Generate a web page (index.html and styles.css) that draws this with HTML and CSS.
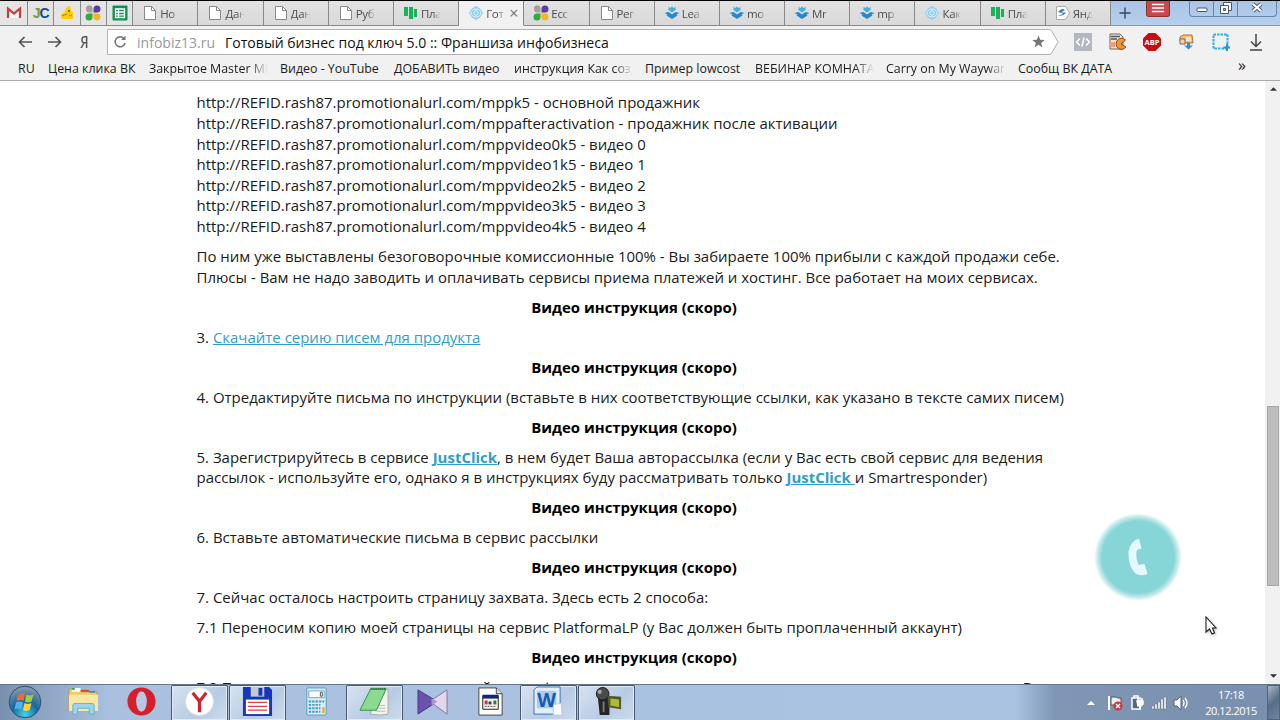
FILE: index.html
```html
<!DOCTYPE html>
<html lang="ru">
<head>
    <meta charset="UTF-8">
    <title>Готовый бизнес под ключ 5.0 :: Франшиза инфобизнеса</title>
    <link rel="stylesheet" href="styles.css">
</head>
<body>
    <!-- Общие значки -->
    <svg class="defs" width="0" height="0">
        <symbol id="doc" viewBox="0 0 16 16">
            <path d="M2.500 1.500h7l4 4v9h-11z" fill="#fff" stroke="#888"/>
            <path d="M9.500 1.500v4h4" fill="none" stroke="#888"/>
        </symbol>
        <symbol id="bars" viewBox="0 0 16 16">
            <path d="M1 2h4v9H1zM6 2h4v12H6zM11 4h3v8h-3z" fill="#16b457"/>
        </symbol>
        <symbol id="eye" viewBox="0 0 16 16">
            <path d="M8 .500L15.500 8 8 15.500.500 8z" fill="#9fd3ee"/>
            <circle cx="8" cy="8" r="6" fill="#8dcdec"/>
            <ellipse cx="8" cy="8" rx="5" ry="4" fill="none" stroke="#e6f5fc"/>
            <circle cx="8" cy="8" r="2.200" fill="none" stroke="#e6f5fc"/>
        </symbol>
        <symbol id="dots" viewBox="0 0 16 16">
            <path d="M1 4a3.300 3.300 0 1 1 6.500 0v3.500H4A3.300 3.300 0 0 1 1 4z" fill="#a89f98"/>
            <path d="M8.500 7.500V4A3.500 3.500 0 1 1 12 7.500z" fill="#5b3c9b"/>
            <path d="M7.500 8.500V12A3.500 3.500 0 1 1 4 8.500z" fill="#35a843"/>
            <path d="M8.500 8.500H12A3.500 3.500 0 1 1 8.500 12z" fill="#f9b51b"/>
        </symbol>
        <symbol id="lead" viewBox="0 0 16 16">
            <path d="M4.500 2l2 1L8 1.500 9.500 3l2-1v3L8 7.500 4.500 5z" fill="#45aee2"/>
            <path d="M.500 8l4-1L8 9.500 11.500 7l4 1-3 1.500 1 1L8 14l-5.500-3.500 1-1z" fill="#2388ce"/>
        </symbol>
    </svg>

    <header>
        <div class="tabs">
            <div class="pin"><svg viewBox="0 0 16 16"><path d="M2 13V3.500l6 5 6-5V13" fill="#f4f4f4" stroke="#cc3a3a" stroke-width="2.200"/></svg></div>
            <div class="pin jc"><span>J</span><b>C</b></div>
            <div class="pin"><svg viewBox="0 0 16 16"><path d="M2 9l4-2 1-4 3-2 2 2v3l2 1v7H3z" fill="#fc0"/><path d="M3 11l5-2M10 10q1 2 3 0" fill="none" stroke="#b88200"/><circle cx="10" cy="6" r="1" fill="#654"/></svg></div>
            <div class="pin"><svg><use href="#dots"/></svg></div>
            <div class="pin"><svg viewBox="0 0 16 16"><rect x=".500" y=".500" width="15" height="15" rx="1" fill="#0f9150"/><path d="M3.500 4h9v8.500h-9zM3.500 7h9M3.500 9.800h9M6.500 4v8" fill="none" stroke="#fff" stroke-width="1.300"/></svg></div>
            <div class="tab"><svg><use href="#doc"/></svg><span>Но</span></div>
            <div class="tab"><svg><use href="#doc"/></svg><span>Дан</span></div>
            <div class="tab"><svg><use href="#doc"/></svg><span>Дан</span></div>
            <div class="tab"><svg><use href="#doc"/></svg><span>Руб</span></div>
            <div class="tab"><svg><use href="#bars"/></svg><span>Пла</span></div>
            <div class="tab active"><svg><use href="#eye"/></svg><span>Гот</span><i>×</i></div>
            <div class="tab"><svg><use href="#dots"/></svg><span>Ecc</span></div>
            <div class="tab"><svg><use href="#doc"/></svg><span>Рег</span></div>
            <div class="tab"><svg><use href="#lead"/></svg><span>Lea</span></div>
            <div class="tab"><svg><use href="#lead"/></svg><span>mo</span></div>
            <div class="tab"><svg><use href="#lead"/></svg><span>Mr</span></div>
            <div class="tab"><svg><use href="#lead"/></svg><span>mp</span></div>
            <div class="tab"><svg><use href="#eye"/></svg><span>Как</span></div>
            <div class="tab"><svg><use href="#bars"/></svg><span>Пла</span></div>
            <div class="tab"><svg viewBox="0 0 16 16"><path d="M1.500 1.500h9l4 6.500-4 6.500h-9z" fill="#fff" stroke="#aaa"/><path d="M3 7q4-5 7-2L6 7.500h5q-3 4-8 3 5-1 5-2z" fill="#3d78c4"/></svg><span>Янд</span></div>
            <div class="window-bar">
                <svg class="plus" viewBox="0 0 12 12"><path d="M6 .500v11M.500 6h11" stroke="#34465c" stroke-width="1.400"/></svg>
                <div class="menu"><svg viewBox="0 0 16 12"><path d="M1 2h14M1 6h14M1 10h14" stroke="#fff" stroke-width="1.800"/></svg></div>
                <div class="controls">
                    <div><svg viewBox="0 0 14 14"><rect x="2" y="7" width="10" height="3.500" rx="1" fill="#fff" stroke="#46566e"/></svg></div>
                    <div><svg viewBox="0 0 14 14"><path d="M4.500 1.500h8v8h-8z" fill="#fff" stroke="#46566e"/><path d="M1.500 4.500h8v8h-8z" fill="#fff" stroke="#46566e"/><path d="M4.500 7.500h2v2h-2z" fill="#9ebbe0" stroke="#46566e"/></svg></div>
                    <div><svg viewBox="0 0 14 14"><path d="M3 3l8 7M11 3l-8 7" stroke="#46566e" stroke-width="4"/><path d="M3 3l8 7M11 3l-8 7" stroke="#fff" stroke-width="2.200"/></svg></div>
                </div>
            </div>
        </div>

        <div class="toolbar">
            <svg class="arrow" viewBox="0 0 14 12"><path d="M14 6H1.500M6.500 1l-5 5 5 5" fill="none" stroke="#555" stroke-width="1.700"/></svg>
            <svg class="arrow" viewBox="0 0 14 12"><path d="M0 6h12.500M7.500 1l5 5-5 5" fill="none" stroke="#555" stroke-width="1.700"/></svg>
            <span class="ya">Я</span>
            <div class="address">
                <svg class="address-shape" viewBox="0 0 952 26"><path d="M.500.500H942q2 0 3 2l6 10.500-6 10.500q-1 2-3 2H.500z" fill="#fff" stroke="#b2b2b2"/></svg>
                <svg class="reload" viewBox="0 0 14 14"><path d="M11 3.600A5 5 0 1 0 12 8" fill="none" stroke="#777" stroke-width="1.500"/><path d="M8 5h4.500V.500z" fill="#777"/></svg>
                <span class="host">infobiz13.ru</span>
                <span class="title">Готовый бизнес под ключ 5.0 :: Франшиза инфобизнеса</span>
                <svg class="star" viewBox="0 0 14 14"><path d="M7 .500l1.800 4.700 4.900.200-3.900 3.100 1.400 4.900L7 10.600l-4.200 2.800 1.400-4.900L.300 5.400l4.900-.200z" fill="#777"/></svg>
            </div>
            <div class="extensions">
                <svg viewBox="0 0 18 18"><path d="M0 0h18v18H0z" fill="#b3b7c2"/><path d="M6 5.500L2.500 9 6 12.500M12 5.500L15.500 9 12 12.500M10 4.500l-2 9" fill="none" stroke="#fff" stroke-width="1.500"/></svg>
                <svg viewBox="0 0 18 18"><path d="M1 1h10l3 3v12H1z" fill="#ece8de" stroke="#665"/><path d="M2 3.500h9M2 6h6" stroke="#555" stroke-width="1.500"/><path d="M1 9h5v5H1z" fill="#ef9d83"/><path d="M16.500 7A5.500 5.500 0 1 0 17 14l-5-3z" fill="#f39431" stroke="#8b4a17"/></svg>
                <svg class="abp" viewBox="0 0 18 18"><path d="M5.500 0h7L18 5.500v7L12.500 18h-7L0 12.500v-7z" fill="#c70d12"/><text x="9" y="12">ABP</text></svg>
                <svg viewBox="0 0 18 18"><path d="M2 4l3-2h9l1 8H6L2 8z" fill="#fbc06d" stroke="#a87438"/><path d="M2 6h5v5H2z" fill="#eed3b2" stroke="#766"/><path d="M8 4h5v4H8z" fill="#fce5b9"/><path d="M9 9.500h3v3h3l-4.500 4-4.500-4h3z" fill="#2e91d0"/></svg>
                <svg viewBox="0 0 18 18"><path d="M1.500 1.500h14v14h-14z" fill="none" stroke="#2caee0" stroke-width="2" stroke-dasharray="2.500 1"/><path d="M15 11v7M11.500 14.500H18" stroke="#1a9cd8" stroke-width="2"/></svg>
                <svg viewBox="0 0 18 18"><path d="M9 1v12M4 8.500l5 5 5-5M3 17h12" fill="none" stroke="#444" stroke-width="1.500"/></svg>
            </div>
        </div>

        <nav class="bookmarks">
            <a>RU</a>
            <a>Цена клика ВК</a>
            <a class="fade">Закрытое Master Mi</a>
            <a>Видео - YouTube</a>
            <a>ДОБАВИТЬ видео</a>
            <a class="fade">инструкция Как соз,</a>
            <a>Пример lowcost</a>
            <a class="fade">ВЕБИНАР КОМНАТА</a>
            <a class="fade">Carry on My Waywar</a>
            <a>Сообщ ВК ДАТА</a>
            <a class="more">»</a>
        </nav>
    </header>

    <main>
        <article>
            <p>http://REFID.rash87.promotionalurl.com/mppk5 - основной продажник<br>
            http://REFID.rash87.promotionalurl.com/mppafteractivation - продажник после активации<br>
            http://REFID.rash87.promotionalurl.com/mppvideo0k5 - видео 0<br>
            http://REFID.rash87.promotionalurl.com/mppvideo1k5 - видео 1<br>
            http://REFID.rash87.promotionalurl.com/mppvideo2k5 - видео 2<br>
            http://REFID.rash87.promotionalurl.com/mppvideo3k5 - видео 3<br>
            http://REFID.rash87.promotionalurl.com/mppvideo4k5 - видео 4</p>
            <p>По ним уже выставлены безоговорочные комиссионные 100% - Вы забираете 100% прибыли с каждой продажи себе.<br>Плюсы - Вам не надо заводить и оплачивать сервисы приема платежей и хостинг. Все работает на моих сервисах.</p>
            <p class="video">Видео инструкция (скоро)</p>
            <p>3. <a>Скачайте серию писем для продукта</a></p>
            <p class="video">Видео инструкция (скоро)</p>
            <p>4. Отредактируйте письма по инструкции (вставьте в них соответствующие ссылки, как указано в тексте самих писем)</p>
            <p class="video">Видео инструкция (скоро)</p>
            <p>5. Зарегистрируйтесь в сервисе <a><b>JustClick</b></a>, в нем будет Ваша авторассылка (если у Вас есть свой сервис для ведения<br>рассылок - используйте его, однако я в инструкциях буду рассматривать только <a><b>JustClick </b></a>и Smartresponder)</p>
            <p class="video">Видео инструкция (скоро)</p>
            <p>6. Вставьте автоматические письма в сервис рассылки</p>
            <p class="video">Видео инструкция (скоро)</p>
            <p>7. Сейчас осталось настроить страницу захвата. Здесь есть 2 способа:</p>
            <p>7.1 Переносим копию моей страницы на сервис PlatformaLP (у Вас должен быть проплаченный аккаунт)</p>
            <p class="video">Видео инструкция (скоро)</p>
            <p>7.2 Переносим копию страницы на свой через форму и размещаем ее на странице с помощью того же сервиса. В</p>
        </article>
        <div class="scrollbar">
            <svg viewBox="0 0 8 4"><path d="M0 4l4-4 4 4z" fill="#333"/></svg>
            <div class="thumb"></div>
            <svg viewBox="0 0 8 4"><path d="M0 0l4 4 4-4z" fill="#333"/></svg>
        </div>
        <!-- Кнопка обратного звонка -->
        <div class="callback">
            <svg viewBox="0 0 20 38"><path d="M11 .500L13.500 10.500L9 12Q7 18 10.500 27L16.500 26L19.500 36Q12 39 7 35Q0 28 .500 14Q2 3 11 .500z" fill="#e6f8fb"/></svg>
        </div>
        <svg class="cursor" viewBox="0 0 12 19"><path d="M1 1v15l3.500-3 2.500 5 2.500-1L7.500 12H11z" fill="#fff" stroke="#222" stroke-width="1.100"/></svg>
    </main>

    <footer>
        <div class="start">
            <svg viewBox="0 0 34 34">
                <defs>
                    <radialGradient id="orb" cx=".5" cy=".9" r=".85"><stop offset="0" stop-color="#3fd5ed"/><stop offset=".5" stop-color="#15679e"/><stop offset="1" stop-color="#8399ae"/></radialGradient>
                </defs>
                <circle cx="17" cy="17" r="15.800" fill="url(#orb)" stroke="#344f68"/>
                <path d="M10 10q4-3 7-1l-1.500 7q-3-2-7 0z" fill="#f06a32"/>
                <path d="M18.500 9.500q3 2 7 0l-2 7q-4 2-6.500 0z" fill="#a4cf3a"/>
                <path d="M8 17.500q4-2 7 0l-1.500 7q-3-2-7 0z" fill="#52b2ec"/>
                <path d="M16.500 18q3 2 7 0l-2 7q-3 2-6.500 0z" fill="#fdd23b"/>
            </svg>
        </div>
        <div class="task"><svg viewBox="0 0 32 32"><path d="M1 3h11l2 3h16v20H1z" fill="#eecb6b" stroke="#bd994a"/><path d="M4 2h9v4H4z" fill="#fff"/><path d="M4 2h3v2H4z" fill="#39a845"/><path d="M13 4h9v2h-9z" fill="#cf4e36"/><path d="M22 5h6v2h-6z" fill="#3d8ec4"/><path d="M1 9h30v17H1z" fill="#f9e7a3"/><path d="M5 29V20q0-2 2-2h18q2 0 2 2v9h-5v-6H10v6z" fill="#9bd4ec" stroke="#66afd2"/></svg></div>
        <div class="task"><svg viewBox="0 0 32 32"><ellipse cx="16" cy="16" rx="14.500" ry="14.500" fill="#d61f2b"/><ellipse cx="16" cy="16" rx="5.500" ry="10.500" fill="#b6c9e2"/></svg></div>
        <div class="task open"><svg viewBox="0 0 32 32"><circle cx="16" cy="16" r="14.500" fill="#fff" stroke="#ddd"/><path d="M9 7l7 9 7-9M16 15v12" fill="none" stroke="#d3222a" stroke-width="3.300"/></svg></div>
        <div class="task open"><svg viewBox="0 0 32 32"><path d="M1 1h27l3 3v27H1z" fill="#1537bb"/><path d="M9 1h14v10H9z" fill="#c6c9d1"/><path d="M17 2h4v8h-4z" fill="#1537bb"/><path d="M4 14h24v15H4z" fill="#fff"/><path d="M6 17h20M6 21h20M6 25h20" stroke="#d6444a" stroke-width="1.300"/></svg></div>
        <div class="task"><svg viewBox="0 0 32 32"><rect x="6" y="2" width="20" height="28" rx="1" fill="#d9edf7" stroke="#5a9bc1"/><path d="M8 5h16v7H8z" fill="#f8fafb" stroke="#7ba9c1"/><path d="M20 6.500h2v4h-2z" fill="none" stroke="#555"/><path d="M8 16h16M8 19.500h12M8 23h12M8 26.500h12" stroke="#489bc6" stroke-width="2" stroke-dasharray="2.500 1"/><path d="M22 22h2.500v6H22z" fill="#edaa3c"/></svg></div>
        <div class="task open"><svg viewBox="0 0 32 32"><path d="M16 3h14v26q-8 2-18 0z" fill="#f4f4ee" stroke="#aaa99e"/><path d="M18 20h9M17 23h10M17 26h10" stroke="#bbb"/><path d="M12 3h16L18 25H1z" fill="#8cda91" stroke="#309245"/><path d="M12 3h16" stroke="#245f2b" stroke-width="2.500" stroke-dasharray="1 1"/></svg></div>
        <div class="task"><svg viewBox="0 0 32 32"><path d="M1 4l20 12L1 29z" fill="#6852ae" stroke="#49348a"/><path d="M31 4v25L16 18v-4z" fill="#e2d7ec" stroke="#84719f"/><path d="M15 13l6 3-6 4z" fill="#a896cf"/></svg></div>
        <div class="task"><svg viewBox="0 0 32 32"><path d="M4 2h18l6 6v22H4z" fill="#fff" stroke="#444"/><path d="M22 2v6h6" fill="#ddd" stroke="#444"/><path d="M8 10h16v14H8z" fill="#f6f3df" stroke="#222"/><path d="M8 9h16v4H8z" fill="#17247d"/><path d="M10 15h3v4h-3z" fill="#c33"/><path d="M14 16h3v3h-3z" fill="#23389d"/><path d="M19 15h3v4h-3z" fill="#287c42"/><path d="M10 21h12" stroke="#555" stroke-dasharray="2 1"/></svg></div>
        <div class="task open word"><svg viewBox="0 0 32 32"><path d="M4 1h24v28H1V4z" fill="#e3eef9" stroke="#3874b1"/><path d="M4 5h20v18H4z" fill="#a9cbed"/><path d="M21 19l8-1 1 12h-9z" fill="#fff" stroke="#bbcde0"/><text x="14" y="22">W</text></svg></div>
        <div class="task open"><svg viewBox="0 0 32 32"><path d="M7 11h12v19H9z" fill="#252525"/><circle cx="12" cy="8" r="6.500" fill="#4b4b4b" stroke="#171717"/><circle cx="9" cy="6" r="2.200" fill="#a9a9a9"/><path d="M17 10l14 1v13l-13-2z" fill="#53582a"/><path d="M20 13l9 1v8l-9-2z" fill="#aebb37"/><path d="M13 16v11" stroke="#777" stroke-width="2"/></svg></div>

        <div class="tray">
            <svg class="up" viewBox="0 0 8 5"><path d="M0 5l4-4 4 4z" fill="#fff"/></svg>
            <svg viewBox="0 0 16 16"><path d="M2 1v14" stroke="#fff" stroke-width="2"/><path d="M4 2h5l2 1h3v7H4z" fill="#e8edf2" stroke="#555"/><circle cx="11" cy="11" r="4.500" fill="#d53435"/><path d="M9 9l4 4M13 9l-4 4" stroke="#fff" stroke-width="1.500"/></svg>
            <svg viewBox="0 0 16 16"><path d="M3 3h8v11H3zM5 1h4v2H5z" fill="#536983" stroke="#fff" stroke-width="1.500"/><path d="M9 3v3M13 3v3M8 6h6v3l-2 2H9zM11 11v4" fill="#fff" stroke="#fff" stroke-width="1.500"/></svg>
            <svg viewBox="0 0 16 16"><path d="M1 11h2v3H1zM4 9h2v5H4zM7 7h2v7H7zM10 4h2v10h-2zM13 2h2v12h-2z" fill="#fff" stroke="#566" stroke-width=".400"/></svg>
            <svg viewBox="0 0 16 16"><path d="M1 5h3l4-4v14l-4-4H1z" fill="#f7f9fa" stroke="#566"/><path d="M10 5q2 3 0 6M12 3q4 5 0 10" fill="none" stroke="#fff" stroke-width="1.300"/></svg>
            <div class="clock">17:18<br>20.12.2015</div>
            <div class="desktop"></div>
        </div>
    </footer>
</body>
</html>
```
FILE: styles.css
```css
* {
    box-sizing: border-box;
}

body {
    margin: 0;
    width: 1280px;
    height: 720px;
    display: flex;
    flex-direction: column;
    overflow: hidden;
    background: #fff;
    color: #1b1b1b;
    font-family: "Open Sans", "Noto Sans", sans-serif;
}

svg {
    display: block;
    flex: none;
}

.defs {
    display: none;
}

/* Шапка браузера */
header {
    height: 81px;
    flex: none;
    background: #f1f1f1;
    border-top: 1px solid #000;
    border-bottom: 1px solid #aaa;
}

.tabs {
    height: 25px;
    display: flex;
    background: #dcdcdc;
}

.pin, .tab {
    display: flex;
    align-items: center;
    border-right: 1px solid #888;
    border-bottom: 1px solid #8b8b8b;
    flex: none;
    background: linear-gradient(#e2e2e2, #d9d9d9);
}

.pin {
    width: 26.300px;
    justify-content: center;
    background: #e4e4e4;
}

.pin:first-child {
    width: 28px;
}

.pin svg, .tab svg {
    width: 16px;
    height: 16px;
}

.jc {
    font: bold 14px "Liberation Sans", sans-serif;
    letter-spacing: -1px;
    color: #154c8b;
}

.jc span {
    color: #6da13c;
}

.tab {
    width: 65.200px;
    padding-left: 9px;
    font-size: 11.500px;
    color: #4e4e4e;
}

.tab span {
    width: 23px;
    margin-left: 2px;
    letter-spacing: -.3px;
    white-space: nowrap;
    -webkit-mask-image: linear-gradient(90deg, #000 50%, transparent 85%);
    mask-image: linear-gradient(90deg, #000 50%, transparent 85%);
}

.tab.active {
    background: #f1f1f1;
    border-bottom-color: #f1f1f1;
}

.tab i {
    font-size: 16px;
    font-style: normal;
    line-height: 16px;
    color: #777;
}

.window-bar {
    flex: 1;
    display: flex;
    align-items: flex-start;
    padding-left: 8px;
    background: linear-gradient(#a9c4e6, #b6cfed);
    border-bottom: 1px solid #8b9bb0;
}

.plus {
    width: 12px;
    height: 12px;
    margin-top: 6px;
}

.menu {
    width: 24px;
    height: 16px;
    margin-left: 15px;
    padding: 1px 4px;
    background: #c7494c;
    border: 1px solid #8c3236;
    border-top: 0;
    border-radius: 0 0 3px 3px;
}

.menu svg {
    width: 14px;
    height: 12px;
}

.controls {
    display: flex;
    height: 16px;
    margin-left: 19px;
    border: 1px solid #6884aa;
    border-top: 0;
    border-radius: 0 0 4px 4px;
}

.controls div {
    width: 24px;
    display: flex;
    justify-content: center;
    border-right: 1px solid #6884aa;
}

.controls div:last-child {
    width: 38px;
    border: 0;
}

.controls svg {
    width: 14px;
    height: 14px;
}

.toolbar {
    height: 31px;
    display: flex;
    align-items: center;
    padding-left: 18px;
}

.arrow {
    width: 14px;
    height: 12px;
    margin-right: 16px;
}

.ya {
    width: 12px;
    margin-left: 1px;
    font-size: 16px;
    line-height: 20px;
    font-weight: 600;
    color: #555;
    transform: scaleX(.8);
}

.address {
    position: relative;
    width: 952px;
    height: 26px;
    margin-left: 16px;
    display: flex;
    align-items: center;
    font-size: 14.060px;
    white-space: nowrap;
}

.address-shape {
    position: absolute;
    inset: 0;
    width: 952px;
    height: 26px;
}

.address > :not(.address-shape) {
    position: relative;
}

.address span {
    padding-top: 1px;
}

.reload {
    width: 14px;
    height: 14px;
    margin-left: 6px;
}

.host {
    width: 88px;
    margin-left: 10px;
    color: #999;
}

.title {
    color: #111;
}

.star {
    width: 13px;
    height: 13px;
    margin-left: auto;
    margin-right: 14px;
}

.extensions {
    display: flex;
    gap: 16.600px;
    margin-left: 15px;
}

.extensions svg {
    width: 18px;
    height: 18px;
}

.abp text {
    font: bold 7.500px "Open Sans", sans-serif;
    fill: #fff;
    text-anchor: middle;
}

.bookmarks {
    height: 23px;
    display: grid;
    grid-template-columns: 30px 101px 131px 114px 120px 131px 110px 131px 132px 220px 20px;
    padding-left: 18px;
    font-size: 12.400px;
    line-height: 23px;
    white-space: nowrap;
}

.fade {
    margin-right: 12px;
    -webkit-mask-image: linear-gradient(90deg, #000 84%, transparent);
    mask-image: linear-gradient(90deg, #000 84%, transparent);
}

.more {
    font-size: 16px;
    line-height: 16px;
}

/* Страница */
main {
    position: relative;
    height: 603px;
    flex: none;
    display: flex;
    justify-content: space-between;
    overflow: hidden;
}

article {
    width: 875px;
    margin-left: 196.500px;
    padding-top: 11.300px;
    font-size: 14.980px;
    line-height: 20.625px;
    white-space: nowrap;
}

p {
    margin: 0 0 9.375px;
}

.video {
    text-align: center;
    font-weight: bold;
    color: #000;
}

article a {
    color: #2f9fca;
    text-decoration: underline;
}

.scrollbar {
    width: 15px;
    padding: 6px 1px 6px 2px;
    display: flex;
    flex-direction: column;
    align-items: center;
    background: #f1f1f1;
}

.scrollbar svg {
    width: 7px;
    height: 4px;
}

.thumb {
    width: 12px;
    height: 180px;
    margin: 315px 0 auto;
    background: #bdbdbd;
    border: 1px solid #a6a6a6;
}

.callback {
    position: absolute;
    left: 1094px;
    top: 432px;
    width: 88px;
    height: 88px;
    display: flex;
    justify-content: center;
    align-items: center;
    border-radius: 50%;
    background: radial-gradient(circle closest-side, #87d6d7 82%, rgba(135, 214, 215, .5) 92%, transparent);
}

.callback svg {
    width: 20px;
    height: 38px;
}

.cursor {
    position: absolute;
    left: 1205px;
    top: 535px;
    width: 12px;
    height: 19px;
    filter: drop-shadow(1px 1px 1px #8888);
}

/* Панель задач */
footer {
    height: 36px;
    flex: none;
    display: flex;
    border-top: 1px solid #63788f;
    background: linear-gradient(90deg, #7890ae 0, #8ea5c4 45px, #a9c1df 110px, #a9c3e1 1015px, #7f97b5 1055px, #7890ae);
}

.start {
    width: 55px;
    padding: 0 0 0 8px;
}

.start svg {
    width: 34px;
    height: 34px;
}

.task {
    width: 57px;
    margin-right: 1.150px;
    display: flex;
    justify-content: center;
    padding-top: 1px;
}

.task svg {
    width: 31px;
    height: 31px;
}

.open {
    background: linear-gradient(135deg, #d7e2f0, #b7cbe4 60%, #cddcec);
    border: 1px solid #455970;
    border-bottom: 0;
    border-radius: 2px 2px 0 0;
    box-shadow: inset 0 0 0 1px #e1eaf5;
    padding-top: 0;
}

.word text {
    font: bold 20px "Open Sans", sans-serif;
    fill: #175bac;
    text-anchor: middle;
}

.tray {
    margin-left: auto;
    display: flex;
    align-items: center;
    gap: 6px;
}

.tray svg {
    width: 16px;
    height: 16px;
}

.tray .up {
    width: 8px;
    height: 5px;
    margin-right: 6px;
}

.clock {
    width: 60px;
    margin-left: 6px;
    text-align: center;
    color: #fff;
    font-size: 11px;
    line-height: 16px;
    letter-spacing: -.450px;
}

.desktop {
    width: 13px;
    height: 35px;
    background: linear-gradient(135deg, #a8b6c7, #586d86 50%, #71869f);
    border: 1px solid #4f6379;
}
```
